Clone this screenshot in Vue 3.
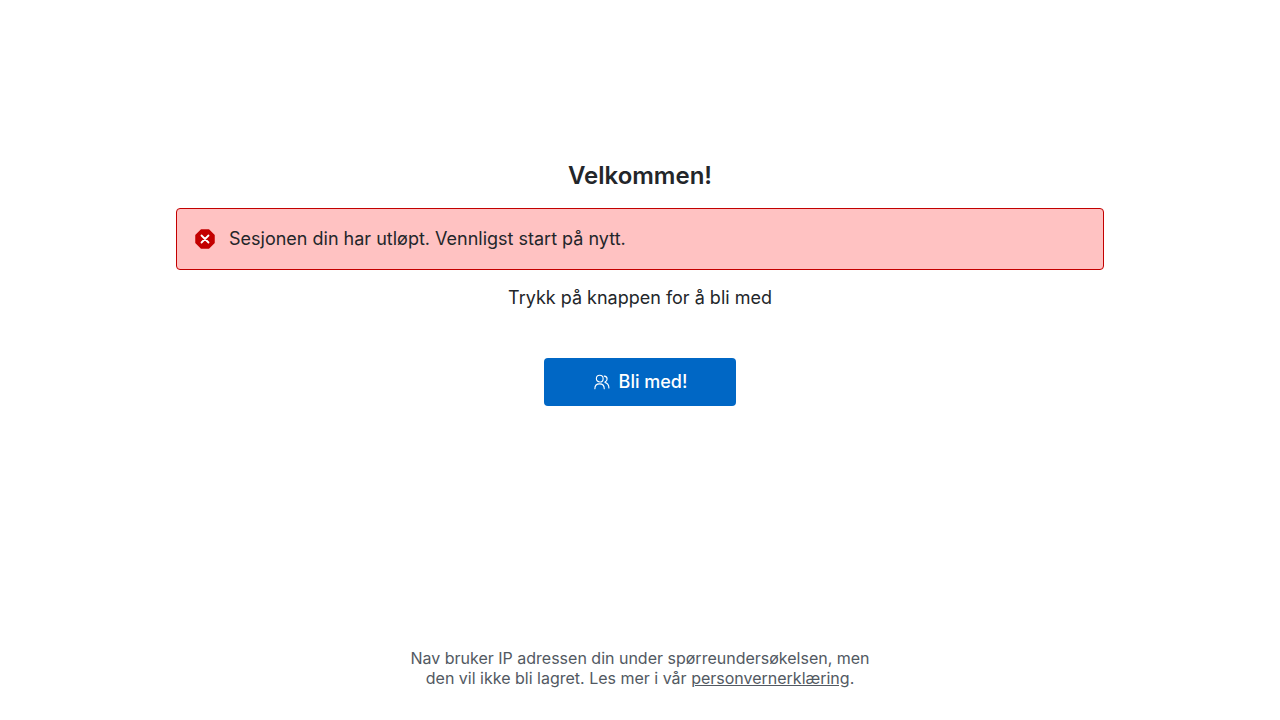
<script setup>
const heading = 'Velkommen!'
const message = 'Sesjonen din har utløpt. Vennligst start på nytt.'
</script>

<template>
  <main class="page">
    <section class="welcome">
      <h1>{{ heading }}</h1>
      <div class="alert" role="alert">
        <svg class="alert-icon" viewBox="0 0 24 24" fill="none" aria-hidden="true">
          <path fill="currentColor" d="M7.742 2.47a.75.75 0 0 1 .53-.22h7.456a.75.75 0 0 1 .53.22l5.272 5.272c.141.14.22.331.22.53v7.456a.75.75 0 0 1-.22.53l-5.272 5.272a.75.75 0 0 1-.53.22H8.272a.75.75 0 0 1-.53-.22L2.47 16.258a.75.75 0 0 1-.22-.53V8.272a.75.75 0 0 1 .22-.53z" />
          <path stroke="#fff" stroke-width="1.8" stroke-linecap="round" d="m8.500 8.500 7 7m0-7-7 7" />
        </svg>
        <p>{{ message }}</p>
      </div>
      <p class="hint">Trykk på knappen for å bli med</p>
      <button class="join" type="button">
        <svg class="join-icon" viewBox="0 0 24 24" fill="none" stroke="currentColor" stroke-width="1.5" stroke-linecap="round" stroke-linejoin="round" aria-hidden="true">
          <circle cx="9" cy="7.500" r="4.500" />
          <path d="M2.500 21c0-4 2.500-6.500 6.250-6.500S15 17 15 21M15 4.200c2.500.2 3.800 1.900 3.800 3.900 0 2-1.100 3.300-2.800 4M16 12.500c3.200 1 5.200 3.700 5.200 7.500" />
        </svg>
        <span>Bli med!</span>
      </button>
    </section>
    <footer>
      Nav bruker IP adressen din under spørreundersøkelsen, men den vil ikke bli lagret. Les mer i vår <a href="#">personvernerklæring</a>.
    </footer>
  </main>
</template>

<style>
body {
  background: #fff;
}
</style>

<style scoped>
.page {
  box-sizing: border-box;
  min-height: 100vh;
  display: flex;
  flex-direction: column;
  justify-content: space-between;
  align-items: center;
  padding: 160px 16px 32px;
  color: #23262a;
  font-family: Inter, "Liberation Sans", sans-serif;
  font-size: 18px;
  line-height: 28px;
}
.welcome {
  width: 100%;
  max-width: 928px;
  display: flex;
  flex-direction: column;
  align-items: center;
}
h1 {
  margin: 0 0 16px;
  font-size: 24px;
  line-height: 32px;
  font-weight: 600;
}
p {
  margin: 0;
}
.alert {
  box-sizing: border-box;
  width: 100%;
  display: flex;
  align-items: center;
  gap: 12px;
  padding: 16px;
  background: #ffc2c2;
  border: 1px solid #c30000;
  border-radius: 4px;
}
.alert-icon {
  width: 24px;
  height: 24px;
  flex: none;
  color: #c30000;
}
.hint {
  margin: 14px 0 46px;
}
.join {
  width: 192px;
  height: 48px;
  display: flex;
  align-items: center;
  justify-content: center;
  gap: 8px;
  padding: 0;
  border: 0;
  border-radius: 4px;
  background: #0067c5;
  color: #fff;
  font-family: inherit;
  font-size: 18px;
  line-height: 24px;
  font-weight: 500;
  cursor: pointer;
}
.join-icon {
  width: 18px;
  height: 18px;
}
footer {
  max-width: 480px;
  text-align: center;
  font-size: 16px;
  line-height: 20px;
  color: #525962;
}
footer a {
  color: inherit;
}
</style>
